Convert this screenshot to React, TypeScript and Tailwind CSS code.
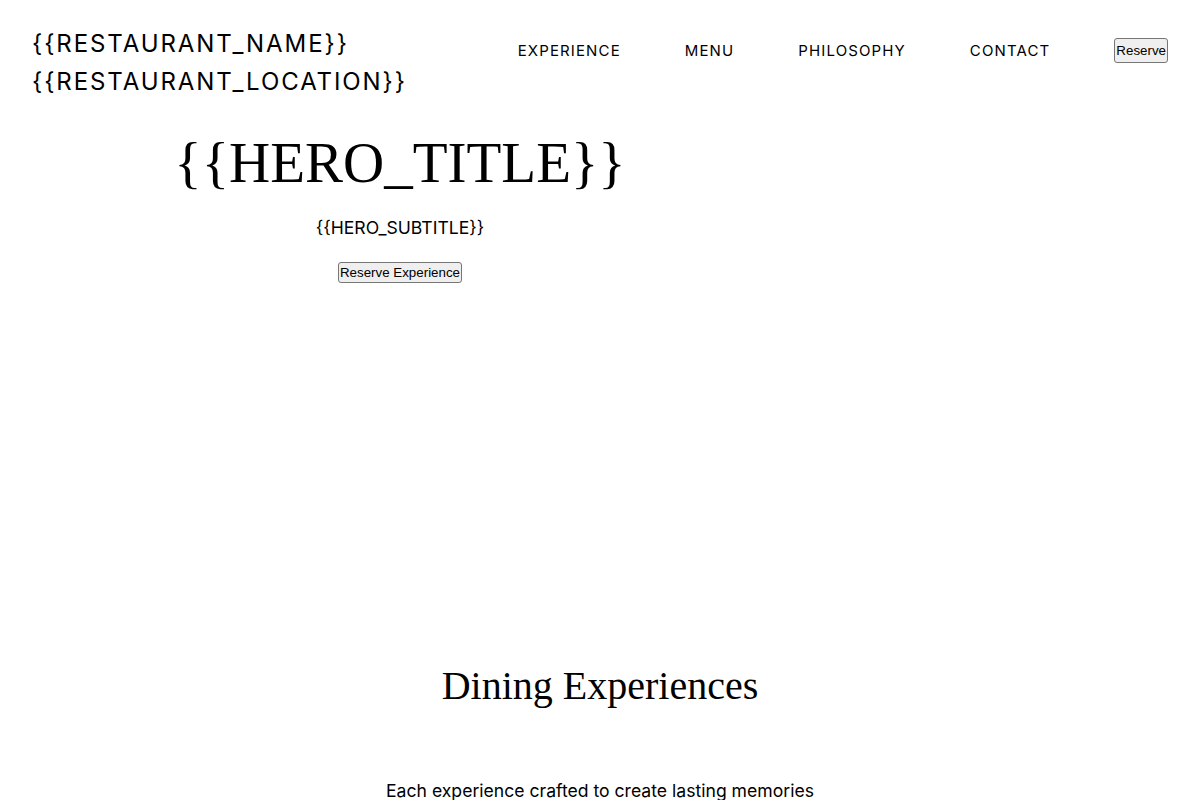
export default function App() {
  return (
    <main className="bg-white text-black min-h-screen">
      <Header />
      <Hero />
      <Experiences />
    </main>
  );
}

const nativeButton =
  "bg-[#efefef] border border-[#767676] rounded-[3px] px-[1px] text-[13.33px] leading-[15px] text-black font-['Liberation_Sans',Arial,sans-serif]";

function Header() {
  const links = ["EXPERIENCE", "MENU", "PHILOSOPHY", "CONTACT"];
  return (
    <header className="flex items-start justify-between px-8 pt-[25px] font-['Inter',sans-serif]">
      <div className="text-2xl leading-[38px] tracking-[0.08em]">
        <div>{"{{RESTAURANT_NAME}}"}</div>
        <div>{"{{RESTAURANT_LOCATION}}"}</div>
      </div>
      <nav className="flex items-center gap-16 mt-[13px]">
        {links.map((l) => (
          <a key={l} href="#" className="text-[15px] tracking-[0.075em] leading-6">
            {l}
          </a>
        ))}
        <button className={nativeButton + " py-[4px]"}>Reserve</button>
      </nav>
    </header>
  );
}

function Hero() {
  return (
    <section className="w-[800px] h-[561px] flex flex-col items-center pt-[30px]">
      <h1 className="font-['Liberation_Serif','Times_New_Roman',serif] text-[57px] leading-[64px]">
        {"{{HERO_TITLE}}"}
      </h1>
      <p className="mt-[19px] font-['Inter',sans-serif] text-[17.6px] leading-7">{"{{HERO_SUBTITLE}}"}</p>
      <button className={nativeButton + " py-[2px] mt-[20px]"}>Reserve Experience</button>
    </section>
  );
}

function Experiences() {
  return (
    <section className="flex flex-col items-center">
      <h2 className="font-['Liberation_Serif','Times_New_Roman',serif] text-[40px] leading-[48px]">
        Dining Experiences
      </h2>
      <p className="mt-[67px] font-['Inter',sans-serif] text-[17.6px] leading-7">
        Each experience crafted to create lasting memories
      </p>
    </section>
  );
}
